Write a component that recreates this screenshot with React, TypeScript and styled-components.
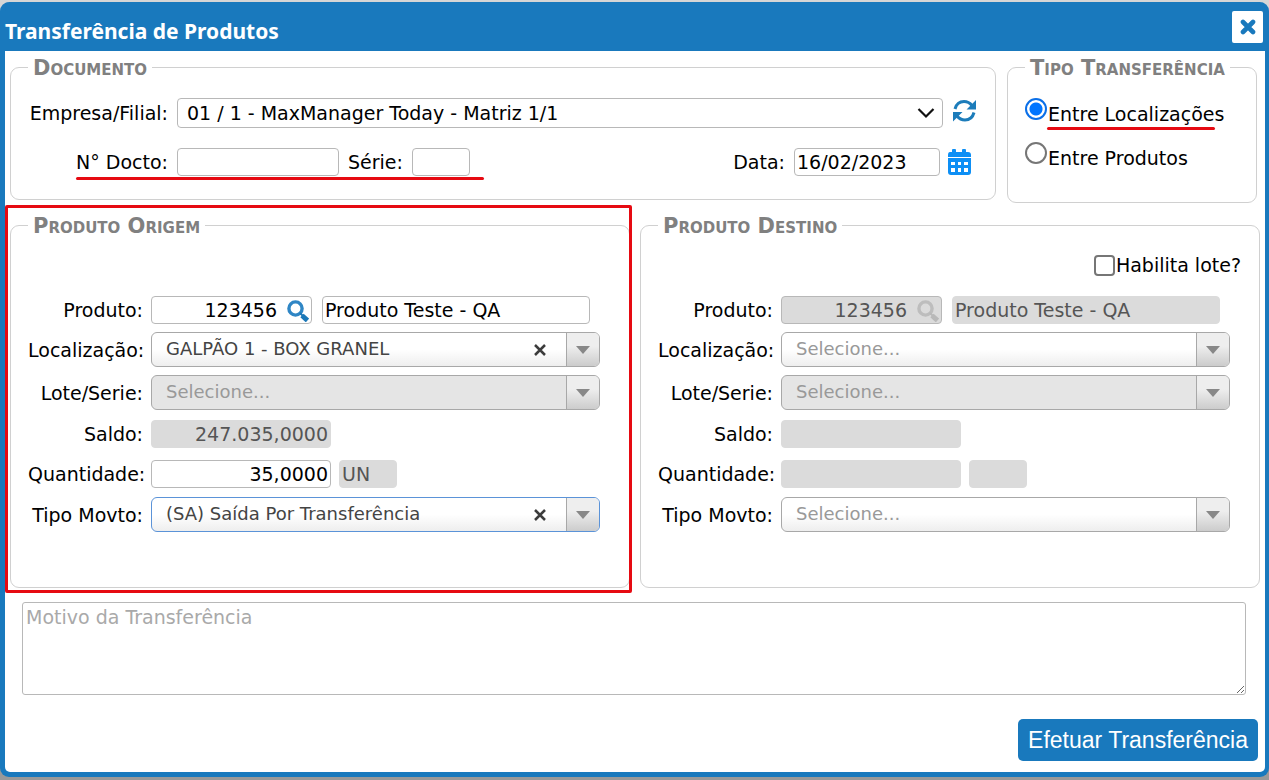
import React from 'react';
import styled, { createGlobalStyle, css } from 'styled-components';

const blue = '#1979bd';

const GlobalStyle = createGlobalStyle`
  * { box-sizing: border-box; }
  html { background: #d6d6d6; }
  body {
    margin: 0;
    color: #000;
    font: 19px/22px "DejaVu Sans", Verdana, sans-serif;
  }
  input, select, textarea, button { font: inherit; color: inherit; margin: 0; }
`;

const Page = styled.div`
  padding: 2px 0 3px;
  background: linear-gradient(#d6d6d6 50%, #999 50%);
`;

const Dialog = styled.main`
  border: solid ${blue};
  border-width: 0 4px 5px 5px;
  border-radius: 9px;
  background: ${blue};
`;

const Header = styled.header`
  display: flex;
  align-items: center;
  justify-content: space-between;
  height: 49px;
  padding-right: 2px;
`;

const Title = styled.h1`
  margin: 0;
  padding-top: 8px;
  color: #fff;
  font: bold 21px/24px "Noto Sans", Tahoma, sans-serif;
`;

const CloseButton = styled.button`
  display: grid;
  place-items: center;
  width: 31px;
  height: 32px;
  padding: 0;
  border: 0;
  border-radius: 2px;
  background: #fff;
  color: ${blue};
`;

const Body = styled.form`
  padding: 5px 5px 11px;
  border-radius: 0 0 5px 5px;
  background: #fff;
`;

const TopRow = styled.div`
  display: flex;
  align-items: flex-start;
  gap: 11px;
  margin: 0 3px 11px 0;
`;

const ProductRow = styled.div`
  display: grid;
  grid-template-columns: 1fr 1fr;
  gap: 10px;
`;

const Group = styled.fieldset`
  min-width: 0;
  margin: 0;
  padding: 0 17px;
  border: 1px solid #d0d0d0;
  border-radius: 9px;
`;

const DocumentGroup = styled(Group)`
  flex: 1;
  padding: 20px 18px 22px 17px;
`;

const TypeGroup = styled(Group)`
  flex: 0 0 250px;
  padding: 20px 0 16px 17px;
`;

const ProductGroup = styled(Group)`
  padding: 0 29px 55px 17px;
`;

const Legend = styled.legend`
  height: 22px;
  padding: 0 5px;
  color: #808080;
  font-size: 21px;
  line-height: 24px;
  font-weight: bold;
  font-variant: small-caps;
  white-space: nowrap;
`;

const DocumentLine = styled.div`
  position: relative;
  display: flex;
  align-items: center;
  gap: 9px;
  height: 30px;
  & + & { margin-top: 19px; }
`;

const Label = styled.label<{ $width?: number }>`
  flex: none;
  width: ${p => (p.$width ? `${p.$width}px` : 'auto')};
  text-align: right;
  white-space: nowrap;
`;

const Spacer = styled.span`
  flex: 1;
`;

const disabledBox = css`
  border-color: #dbdbdb;
  background: #dbdbdb;
  color: #555;
`;

const TextInput = styled.input<{ $width?: number; $right?: boolean }>`
  flex: ${p => (p.$width ? 'none' : '1')};
  width: ${p => (p.$width ? `${p.$width}px` : 'auto')};
  min-width: 0;
  height: 28px;
  padding: 0 2px;
  border: 1px solid #b8b8b8;
  border-radius: 4px;
  background: #fff;
  text-align: ${p => (p.$right ? 'right' : 'left')};
  &:disabled { ${disabledBox} }
`;

const CompanyBox = styled.span`
  display: flex;
  flex: 1;
  align-items: center;
  height: 30px;
  padding-right: 7px;
  border: 1px solid #b8b8b8;
  border-radius: 4px;
`;

const PlainSelect = styled.select`
  flex: 1;
  min-width: 0;
  height: 100%;
  padding: 0 9px;
  border: 0;
  appearance: none;
  background: transparent;
`;

const IconButton = styled.button`
  display: grid;
  flex: none;
  width: 25px;
  height: 28px;
  padding: 0;
  border: 0;
  background: none;
`;

const DateTools = styled.span`
  display: flex;
  gap: 7px;
  padding-right: 5px;
`;

const RadioLine = styled.div`
  position: relative;
  display: flex;
  align-items: flex-start;
  gap: 1px;
  height: 44px;
  label { margin-top: 5px; white-space: nowrap; }
`;

const Radio = styled.input`
  flex: none;
  width: 22px;
  height: 22px;
  border: 2px solid #767676;
  border-radius: 50%;
  appearance: none;
  background: #fff;
  &:checked {
    border-color: #0a6fe8;
    background: radial-gradient(circle, #0075ff 6px, #fff 7px);
  }
`;

const OptionLine = styled.div`
  display: flex;
  align-items: center;
  justify-content: flex-end;
  gap: 1px;
  height: 60px;
  margin-right: -11px;
  padding-bottom: 2px;
`;

const Checkbox = styled.input`
  width: 21px;
  height: 21px;
  border: 2px solid #767676;
  border-radius: 4px;
  appearance: none;
  background: #fff;
  &:checked { background: #0075ff; }
`;

const Fields = styled.div`
  display: grid;
  gap: 8px;
`;

const Field = styled.div`
  display: flex;
  align-items: center;
  gap: 8px;
`;

const FieldLine = styled.div<{ $height: number }>`
  display: flex;
  flex: 1;
  align-items: center;
  gap: 8px;
  min-width: 0;
  height: ${p => p.$height}px;
`;

const ProductLine = styled(FieldLine)`
  gap: 10px;
  padding-right: 10px;
`;

const CodeBox = styled.span<{ $disabled?: boolean }>`
  display: flex;
  align-items: center;
  width: 161px;
  height: 28px;
  border: 1px solid #b8b8b8;
  border-radius: 4px;
  ${p => p.$disabled && css`background: #dbdbdb; color: #555;`}
`;

const CodeInput = styled.input`
  flex: 1;
  min-width: 0;
  height: 100%;
  padding: 0;
  border: 0;
  background: transparent;
  text-align: right;
`;

const SearchButton = styled.button`
  display: grid;
  place-items: center;
  width: 34px;
  height: 100%;
  padding: 2px 0 0 8px;
  border: 0;
  background: none;
`;

const ComboBox = styled.span<{ $disabled?: boolean; $focused?: boolean }>`
  display: flex;
  flex: 1;
  align-items: stretch;
  height: 35px;
  overflow: hidden;
  border: 1px solid ${p => (p.$focused ? '#5b93d8' : '#a8a8a8')};
  border-radius: 6px;
  background: ${p => (p.$disabled ? '#e5e5e5' : 'linear-gradient(#fff 50%, #eee)')};
`;

const ComboSelect = styled.select<{ $empty?: boolean }>`
  flex: 1;
  min-width: 0;
  padding: 0 14px 2px;
  border: 0;
  appearance: none;
  background: transparent;
  color: ${p => (p.$empty ? '#999' : '#444')};
  font-size: 18px;
  opacity: 1;
`;

const ClearButton = styled.button`
  display: grid;
  flex: none;
  place-items: center;
  width: 52px;
  padding: 0;
  border: 0;
  background: none;
`;

const ComboArrow = styled.span`
  display: grid;
  flex: none;
  place-items: center;
  width: 33px;
  border-left: 1px solid #a8a8a8;
  background: linear-gradient(#eee 40%, #ccc);
`;

const Reason = styled.textarea`
  display: block;
  width: calc(100% - 26px);
  height: 93px;
  margin: 14px 0 24px 12px;
  padding: 3px;
  border: 1px solid #b8b8b8;
  border-radius: 3px;
  background: #fff;
  &::placeholder { color: #a9a9a9; }
`;

const Footer = styled.footer`
  display: flex;
  justify-content: flex-end;
  padding-right: 2px;
`;

const SubmitButton = styled.button`
  height: 42px;
  padding: 0 10px;
  border: 0;
  border-radius: 5px;
  background: ${blue};
  color: #fff;
  font: 23px/26px "Liberation Sans", Arial, sans-serif;
`;

const Marked = styled.div`
  position: relative;
  display: grid;
`;

const RedFrame = styled.span`
  position: absolute;
  inset: -9px -2px -5px -5px;
  border: 3px solid #e60a12;
  border-radius: 2px;
  pointer-events: none;
`;

const RedLine = styled.span<{ $left: number; $top: number; $width: number }>`
  position: absolute;
  left: ${p => p.$left}px;
  top: ${p => p.$top}px;
  width: ${p => p.$width}px;
  height: 3px;
  border-radius: 2px;
  background: #e60a12;
`;

const SearchIcon = ({ muted }: { muted?: boolean }) => (
  <svg width="22" height="22" viewBox="0 0 22 22" fill="none" stroke={muted ? '#b9b9b9' : '#1b78b8'}>
    <circle cx="8.500" cy="8.500" r="6.600" strokeWidth="3.400" stroke={muted ? '#bdbdbd' : '#2f86c5'} />
    <path d="M13 13 L16 16" strokeWidth="2" />
    <path d="M15 15.500 L20.500 20.500" strokeWidth="5" />
  </svg>
);

const RefreshIcon = () => (
  <svg width="25" height="24" viewBox="0 0 25 24" fill="none" stroke="#1c7cba" strokeWidth="3">
    <path d="M3 10 C4.500 4.500 8 2.500 12 2.500 C15.500 2.500 18 4 20 6.500" />
    <path d="M22 13.500 C20.500 19 17 21 13 21 C9.500 21 7 19.500 5 17" />
    <path d="M24 1 V10.500 H14.500 Z M1 22.500 V13 H10.500 Z" fill="#1c7cba" stroke="none" />
  </svg>
);

const CalendarIcon = () => (
  <svg width="25" height="28" viewBox="0 0 25 28" fill="#0d8ff5">
    <rect x="5" y="1" width="4" height="6" rx="1" />
    <rect x="15" y="1" width="4" height="6" rx="1" />
    <path d="M3 4 H21 Q24 4 24 7 V9 H1 V7 Q1 4 3 4 Z" />
    <path d="M1 10 H24 V24 Q24 27 21 27 H4 Q1 27 1 24 Z" />
    <g fill="#fff">
      <rect x="4" y="14" width="4" height="3" />
      <rect x="11" y="14" width="3" height="3" />
      <rect x="17" y="14" width="4" height="3" />
      <rect x="4" y="20" width="4" height="4" />
      <rect x="11" y="20" width="3" height="4" />
      <rect x="17" y="20" width="4" height="4" />
    </g>
  </svg>
);

type ComboProps = { id: string; value?: string; disabled?: boolean; focused?: boolean };

const Combo = ({ id, value, disabled, focused }: ComboProps) => (
  <ComboBox $disabled={disabled} $focused={focused}>
    <ComboSelect id={id} disabled={disabled} $empty={!value}>
      <option>{value ?? 'Selecione...'}</option>
    </ComboSelect>
    {value && (
      <ClearButton type="button" aria-label="Limpar">
        <svg width="12" height="12" viewBox="0 0 12 12" stroke="#3c3c3c" strokeWidth="2.500">
          <path d="M1 1 L11 11 M11 1 L1 11" />
        </svg>
      </ClearButton>
    )}
    <ComboArrow>
      <svg width="14" height="8" viewBox="0 0 14 8" fill="#888"><path d="M0 0 H14 L7 8 Z" /></svg>
    </ComboArrow>
  </ComboBox>
);

type ProductProps = {
  prefix: string;
  title: string;
  readOnly?: boolean;
  location?: string;
  balance?: string;
  quantity?: string;
  unit?: string;
  movement?: string;
  children?: React.ReactNode;
};

const labelWidth = 115;

const Product = (p: ProductProps) => (
  <ProductGroup>
    <Legend>{p.title}</Legend>
    <OptionLine>{p.children}</OptionLine>
    <Fields>
      <Field>
        <Label $width={labelWidth} htmlFor={`${p.prefix}-produto`}>Produto:</Label>
        <ProductLine $height={28}>
          <CodeBox $disabled={p.readOnly}>
            <CodeInput id={`${p.prefix}-produto`} defaultValue="123456" disabled={p.readOnly} />
            <SearchButton type="button" aria-label="Pesquisar produto" disabled={p.readOnly}>
              <SearchIcon muted={p.readOnly} />
            </SearchButton>
          </CodeBox>
          <TextInput aria-label="Descrição do produto" defaultValue="Produto Teste - QA" disabled={p.readOnly} />
        </ProductLine>
      </Field>
      <Field>
        <Label $width={labelWidth} htmlFor={`${p.prefix}-local`}>Localização:</Label>
        <Combo id={`${p.prefix}-local`} value={p.location} />
      </Field>
      <Field>
        <Label $width={labelWidth} htmlFor={`${p.prefix}-lote`}>Lote/Serie:</Label>
        <Combo id={`${p.prefix}-lote`} disabled />
      </Field>
      <Field>
        <Label $width={labelWidth} htmlFor={`${p.prefix}-saldo`}>Saldo:</Label>
        <FieldLine $height={32}>
          <TextInput id={`${p.prefix}-saldo`} $width={180} $right disabled defaultValue={p.balance} />
        </FieldLine>
      </Field>
      <Field>
        <Label $width={labelWidth} htmlFor={`${p.prefix}-qtd`}>Quantidade:</Label>
        <FieldLine $height={31}>
          <TextInput id={`${p.prefix}-qtd`} $width={180} $right disabled={p.readOnly} defaultValue={p.quantity} />
          <TextInput aria-label="Unidade" $width={58} disabled defaultValue={p.unit} />
        </FieldLine>
      </Field>
      <Field>
        <Label $width={labelWidth} htmlFor={`${p.prefix}-tipo`}>Tipo Movto:</Label>
        <Combo id={`${p.prefix}-tipo`} value={p.movement} focused={!!p.movement} />
      </Field>
    </Fields>
  </ProductGroup>
);

export default function App() {
  return (
    <>
      <GlobalStyle />
      <Page>
        <Dialog>
          <Header>
            <Title>Transferência de Produtos</Title>
            <CloseButton type="button" aria-label="Fechar">
              <svg width="16" height="16" viewBox="0 0 16 16" stroke="currentColor" strokeWidth="4.600" strokeLinecap="round">
                <path d="M3 3 L13 13 M13 3 L3 13" />
              </svg>
            </CloseButton>
          </Header>
          <Body onSubmit={e => e.preventDefault()}>
            <TopRow>
              <DocumentGroup>
                <Legend>Documento</Legend>
                <DocumentLine>
                  <Label $width={140} htmlFor="empresa">Empresa/Filial:</Label>
                  <CompanyBox>
                    <PlainSelect id="empresa">
                      <option>01 / 1 - MaxManager Today - Matriz 1/1</option>
                    </PlainSelect>
                    <svg width="18" height="12" viewBox="0 0 18 12" fill="none" stroke="#111" strokeWidth="2.200">
                      <path d="M1.500 2 L9 9.500 L16.500 2" />
                    </svg>
                  </CompanyBox>
                  <IconButton type="button" aria-label="Atualizar">
                    <RefreshIcon />
                  </IconButton>
                </DocumentLine>
                <DocumentLine>
                  <Label $width={140} htmlFor="docto">N° Docto:</Label>
                  <TextInput id="docto" $width={162} />
                  <Label htmlFor="serie">Série:</Label>
                  <TextInput id="serie" $width={58} />
                  <Spacer />
                  <Label htmlFor="data">Data:</Label>
                  <DateTools>
                    <TextInput id="data" $width={146} defaultValue="16/02/2023" />
                    <IconButton type="button" aria-label="Abrir calendário">
                      <CalendarIcon />
                    </IconButton>
                  </DateTools>
                  <RedLine $left={48} $top={30} $width={408} />
                </DocumentLine>
              </DocumentGroup>
              <TypeGroup>
                <Legend>Tipo Transferência</Legend>
                <RadioLine>
                  <Radio type="radio" name="tipo" id="localizacoes" defaultChecked />
                  <label htmlFor="localizacoes">Entre Localizações</label>
                  <RedLine $left={22} $top={29} $width={168} />
                </RadioLine>
                <RadioLine>
                  <Radio type="radio" name="tipo" id="produtos" />
                  <label htmlFor="produtos">Entre Produtos</label>
                </RadioLine>
              </TypeGroup>
            </TopRow>
            <ProductRow>
              <Marked>
                <Product
                  prefix="origem"
                  title="Produto Origem"
                  location="GALPÃO 1 - BOX GRANEL"
                  balance="247.035,0000"
                  quantity="35,0000"
                  unit="UN"
                  movement="(SA) Saída Por Transferência"
                />
                <RedFrame />
              </Marked>
              <Product prefix="destino" title="Produto Destino" readOnly>
                <Checkbox type="checkbox" id="habilita" />
                <label htmlFor="habilita">Habilita lote?</label>
              </Product>
            </ProductRow>
            <Reason aria-label="Motivo da Transferência" placeholder="Motivo da Transferência" />
            <Footer>
              <SubmitButton type="submit">Efetuar Transferência</SubmitButton>
            </Footer>
          </Body>
        </Dialog>
      </Page>
    </>
  );
}
